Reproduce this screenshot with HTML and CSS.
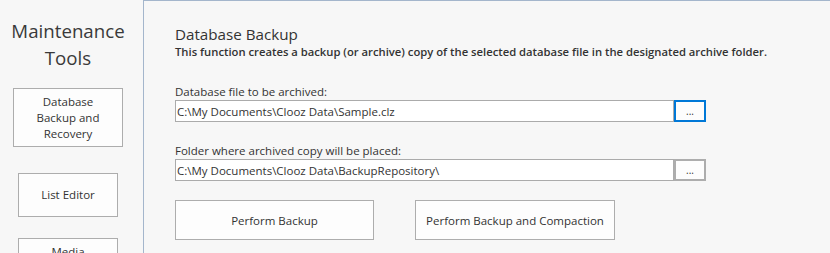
FILE: index.html
```html
<!DOCTYPE html>
<html lang="en">
<head>
    <meta charset="UTF-8">
    <title>Maintenance Tools</title>
    <link rel="stylesheet" href="styles.css">
</head>
<body>
    <div class="sidebar">
        <div class="side-title">Maintenance<br>Tools</div>
        <button class="side-btn wide">Database<br>Backup and<br>Recovery</button>
        <button class="side-btn">List Editor</button>
        <button class="side-btn">Media<br>Manager</button>
    </div>
    <div class="panel">
        <h1 class="panel-title">Database Backup</h1>
        <p class="panel-desc">This function creates a backup (or archive) copy of the selected database file in the designated archive folder.</p>

        <label class="field-label first">Database file to be archived:</label>
        <div class="field-row">
            <input class="path-input" type="text" value="C:\My Documents\Clooz Data\Sample.clz">
            <button class="browse-btn focused">...</button>
        </div>

        <label class="field-label">Folder where archived copy will be placed:</label>
        <div class="field-row">
            <input class="path-input" type="text" value="C:\My Documents\Clooz Data\BackupRepository\">
            <button class="browse-btn">...</button>
        </div>

        <div class="actions">
            <button class="action-btn">Perform Backup</button>
            <button class="action-btn">Perform Backup and Compaction</button>
        </div>
    </div>
</body>
</html>
```

FILE: styles.css
```css
html, body {
    margin: 0;
    height: 100%;
    overflow: hidden;
}
body {
    display: flex;
    background: #f7f7f7;
    color: #333;
    font-family: "Open Sans", "Noto Sans", sans-serif;
    font-size: 11.5px;
}
button, input {
    font-family: inherit;
    font-size: 11.5px;
    color: #333;
}

/* left column */
.sidebar {
    width: 136px;
    padding-right: 7px;
    padding-top: 17px;
    display: flex;
    flex-direction: column;
    align-items: center;
}
.side-title {
    font-size: 18.7px;
    line-height: 27px;
    text-align: center;
    color: #3a3a3a;
    margin-bottom: 17px;
}
.side-btn {
    width: 100px;
    height: 44px;
    margin-bottom: 21px;
    background: #fdfdfd;
    border: 1px solid #adadad;
    line-height: 16px;
    padding: 0;
    flex-shrink: 0;
}
.side-btn.wide {
    width: 110px;
    height: 59px;
    margin-bottom: 26px;
}

/* right panel */
.panel {
    flex: 1;
    border-left: 1px solid #a4b6cc;
    border-top: 1px solid #a4b6cc;
    padding: 24px 0 0 31px;
}
.panel-title {
    margin: 0;
    font-size: 15.2px;
    font-weight: normal;
    line-height: 19px;
}
.panel-desc {
    margin: 0;
    font-size: 11.25px;
    font-weight: 600;
    line-height: 16px;
}
.field-label {
    display: block;
    line-height: 14px;
    margin-top: 22px;
}
.field-label.first {
    margin-top: 25px;
}
.field-row {
    display: flex;
    margin-top: 1px;
}
.path-input {
    box-sizing: border-box;
    width: 499px;
    height: 22px;
    border: 1px solid #ababab;
    background: #fff;
    padding: 0 1px;
    outline: none;
}
.browse-btn {
    box-sizing: border-box;
    width: 32px;
    height: 22px;
    border: 2px solid #adadad;
    background: #fdfdfd;
    padding: 0;
    font-size: 10px;
    line-height: 18px;
}
.browse-btn.focused {
    border-color: #0078d7;
}
.actions {
    display: flex;
    gap: 41px;
    margin-top: 19px;
}
.action-btn {
    box-sizing: border-box;
    width: 199px;
    height: 40px;
    border: 1px solid #adadad;
    background: #fdfdfd;
}
.action-btn + .action-btn {
    width: 200px;
}
```
